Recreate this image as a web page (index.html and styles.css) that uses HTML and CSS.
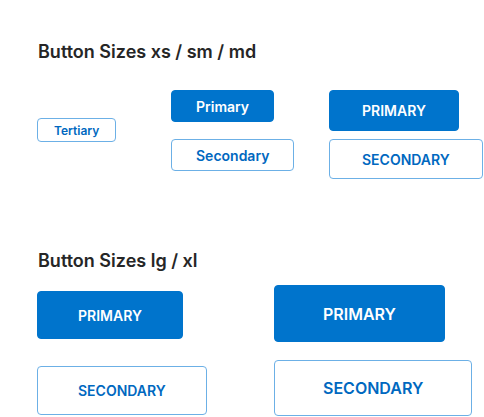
FILE: index.html
```html
<!DOCTYPE html>
<html>
<head>
<meta charset="utf-8">
<link rel="stylesheet" href="styles.css">
</head>
<body>
<main class="page">
  <section class="section section-small">
    <h2 class="title">Button Sizes xs / sm / md</h2>
    <div class="grid grid-small">
      <div class="col col-xs">
        <button class="btn btn-secondary btn-xs">Tertiary</button>
      </div>
      <div class="col col-sm">
        <button class="btn btn-primary btn-sm">Primary</button>
        <button class="btn btn-secondary btn-sm">Secondary</button>
      </div>
      <div class="col col-md">
        <button class="btn btn-primary btn-md">PRIMARY</button>
        <button class="btn btn-secondary btn-md">SECONDARY</button>
      </div>
    </div>
  </section>
  <section class="section section-large">
    <h2 class="title">Button Sizes lg / xl</h2>
    <div class="grid grid-large">
      <div class="col col-lg">
        <button class="btn btn-primary btn-lg">PRIMARY</button>
        <button class="btn btn-secondary btn-lg">SECONDARY</button>
      </div>
      <div class="col col-xl">
        <button class="btn btn-primary btn-xl">PRIMARY</button>
        <button class="btn btn-secondary btn-xl">SECONDARY</button>
      </div>
    </div>
  </section>
</main>
</body>
</html>
```

FILE: styles.css
```css
* { box-sizing: border-box; }
html, body { margin: 0; padding: 0; background: #ffffff; }
body { font-family: Inter, "Noto Sans", sans-serif; color: #262626; }
.page { padding: 40px 0 0 37px; }
.title {
  margin: 0 0 0 1px;
  font-size: 18px;
  line-height: 24px;
  font-weight: 600;
  color: #262626;
}
.section-small .grid { margin-top: 26px; }
.section-large { margin-top: 70px; }
.section-large .grid { margin-top: 12px; }
.grid { display: grid; align-items: start; }
.grid-small { grid-template-columns: 134px 158px auto; }
.grid-large { grid-template-columns: 237px auto; }
.col { display: flex; flex-direction: column; align-items: flex-start; }
.col-xs { padding-top: 28px; }
.col-sm { gap: 17px; }
.col-md { gap: 8px; }
.col-lg { gap: 27px; padding-top: 6px; }
.col-xl { gap: 18px; }
.btn {
  font-family: Inter, "Noto Sans", sans-serif;
  font-weight: 600;
  border-radius: 4px;
  display: inline-flex;
  align-items: center;
  justify-content: center;
  margin: 0;
  cursor: pointer;
  white-space: nowrap;
}
.btn-primary {
  background: #0074cc;
  color: #ffffff;
  border: 1px solid #0074cc;
}
.btn-secondary {
  background: #ffffff;
  color: #0068c0;
  border: 1px solid #6cb0e6;
}
.btn-xs { height: 24px; padding: 0 16px; font-size: 12px; }
.btn-sm { height: 32px; padding: 0 24px; font-size: 14px; }
.btn-md { height: 41px; padding: 0 32px; font-size: 14px; }
.btn-md.btn-secondary { height: 40px; }
.btn-lg { height: 48px; padding: 0 40px; font-size: 14px; }
.btn-lg.btn-secondary { height: 49px; }
.btn-xl { height: 57px; padding: 0 48px; font-size: 16px; }
.btn-xl.btn-secondary { height: 56px; }
```
